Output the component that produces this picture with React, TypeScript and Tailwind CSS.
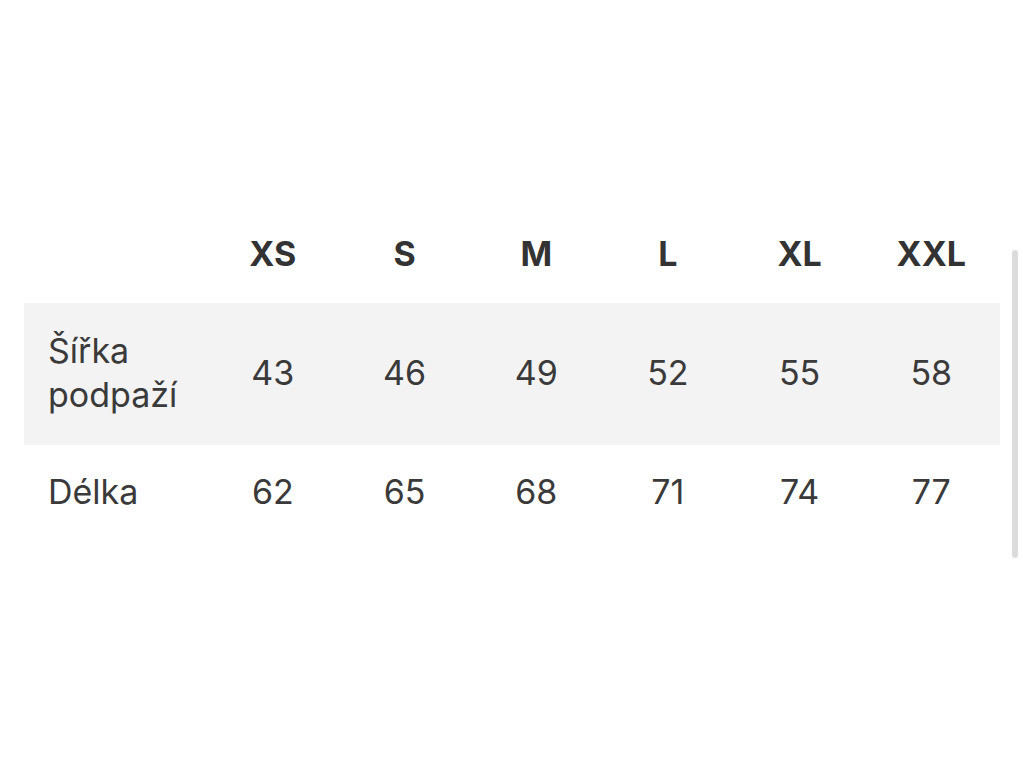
import React from 'react';

const sizes = ['XS', 'S', 'M', 'L', 'XL', 'XXL'];

const rows = [
  { label: ['Šířka', 'podpaží'], values: [43, 46, 49, 52, 55, 58], shaded: true },
  { label: ['Délka'], values: [62, 65, 68, 71, 74, 77], shaded: false },
];

export default function App() {
  return (
    <div
      className="relative w-[1024px] h-[768px] bg-white text-[#3a3a3a] overflow-hidden"
      style={{ fontFamily: 'Inter, "Noto Sans", sans-serif' }}
    >
      <div className="pt-[207px] px-6">
        <div className="w-[976px]">
          <div className="flex h-[96px]">
            <div className="w-[183px]" />
            {sizes.map((s) => (
              <div key={s} className="w-[131.7px] flex items-center justify-center pb-[4px] text-[34px] font-bold text-[#333]">
                {s}
              </div>
            ))}
          </div>

          {rows.map((row) => (
            <div
              key={row.label.join(' ')}
              className={`flex ${row.shaded ? 'bg-[#f3f3f3] h-[142px]' : 'h-[96px]'}`}
            >
              <div className="w-[183px] flex flex-col justify-center pl-6 pb-[3px] text-[34px] leading-[44px]">
                {row.label.map((l) => (
                  <span key={l}>{l}</span>
                ))}
              </div>
              {row.values.map((v) => (
                <div key={v} className="w-[131.7px] flex items-center justify-center pb-[3px] text-[34px]">
                  {v}
                </div>
              ))}
            </div>
          ))}
        </div>
      </div>

      {/* scroll indicator */}
      <div className="absolute left-[1012px] top-[250px] w-[6px] h-[308px] rounded-full bg-[#dcdcdc]" />
    </div>
  );
}
